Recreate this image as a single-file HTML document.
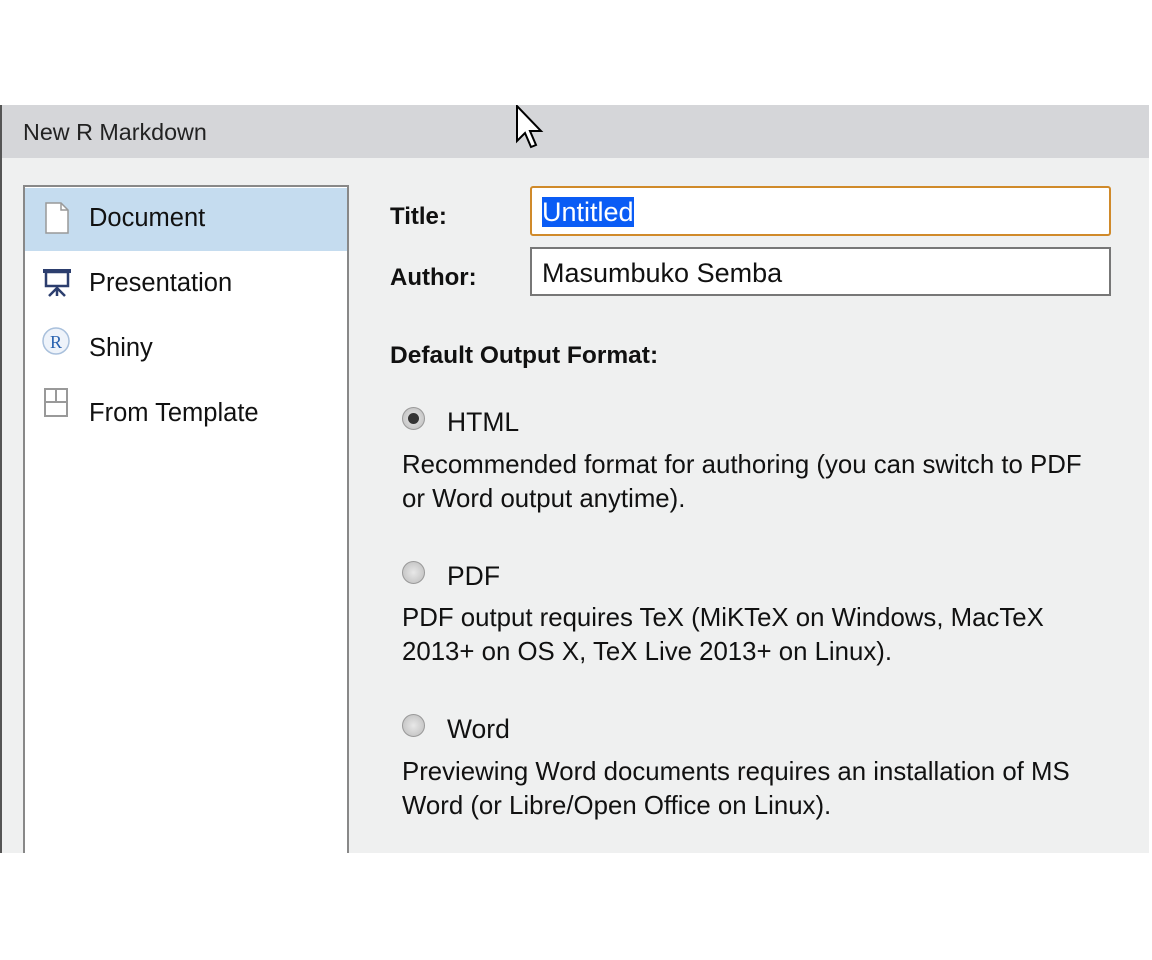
<!DOCTYPE html>
<html><head><style>
*{margin:0;padding:0;box-sizing:border-box}
body{width:1152px;height:960px;background:#fff;position:relative;overflow:hidden;font-family:"Liberation Sans",sans-serif;color:#111}
.dlg{position:absolute;left:0;top:105px;width:1149px;height:748px;background:#eff0f0;border-left:2px solid #555;overflow:hidden}
.tb{position:absolute;left:0;top:0;right:0;height:53px;background:#d5d6d9;font-size:23.3px;padding:14px 0 0 21px;color:#222}
.list{position:absolute;left:21px;top:80px;width:326px;height:700px;background:#fff;border:2px solid #888}
.row{position:absolute;left:0;width:322px;height:63px;font-size:25.5px;padding-left:64px;line-height:60px}
.sel{background:#c5dcef}
.lbl{position:absolute;font-weight:bold;font-size:24px}
.inp{position:absolute;left:530px;width:581px;background:#fff;font-size:27px;padding-left:10px}
.radio{position:absolute;left:402px;width:23px;height:23px;border-radius:50%;background:radial-gradient(circle,#e8e8e8,#bbb);border:1px solid #999}
.radio.on::after{content:"";position:absolute;left:5px;top:5px;width:11px;height:11px;border-radius:50%;background:#333}
.rl{position:absolute;left:447px;font-size:26.5px}
.desc{position:absolute;left:402px;font-size:25.8px;line-height:34px;width:745px;white-space:nowrap}
</style></head><body>
<div class="dlg">
<div class="tb">New R Markdown</div>
<div class="list">
<div class="row sel" style="top:1px">Document</div>
<div class="row" style="top:66px">Presentation</div>
<div class="row" style="top:131px">Shiny</div>
<div class="row" style="top:196px">From Template</div>
<svg style="position:absolute;left:17px;top:15px" width="30" height="250" viewBox="0 0 30 250">
<path d="M4 1H19L26 8V31H4Z" fill="#fff" stroke="#999" stroke-width="1.5"/>
<path d="M19 1V8H26" fill="none" stroke="#999" stroke-width="1.5"/>
<rect x="1" y="67" width="28" height="4" fill="#2c3e6e"/>
<rect x="4" y="70" width="22" height="14" fill="none" stroke="#2c3e6e" stroke-width="2.5"/>
<path d="M15 84V94M15 86L7 94M15 86L23 94" stroke="#2c3e6e" stroke-width="2.5" fill="none"/>
<circle cx="14" cy="139" r="13" fill="#eef3fa" stroke="#a9c0dc" stroke-width="1.5"/>
<text x="14" y="146" font-family="Liberation Serif" font-size="18" fill="#2a63b0" text-anchor="middle">R</text>
<rect x="3" y="187" width="22" height="27" fill="none" stroke="#999" stroke-width="2"/>
<path d="M3 200H25M14 187V200" stroke="#999" stroke-width="2"/>
</svg>
</div>
</div>
<div class="lbl" style="left:390px;top:203px">Title:</div>
<div class="lbl" style="left:390px;top:264px">Author:</div>
<div class="inp" style="top:186px;height:50px;border:2px solid #d08a2a;border-radius:3px;padding-top:9px"><span style="background:#0a5cf5;color:#fff">Untitled</span></div>
<div class="inp" style="top:247px;height:49px;border:2px solid #777;padding-top:9px">Masumbuko Semba</div>
<div class="lbl" style="left:390px;top:342px;font-size:24.5px">Default Output Format:</div>
<div class="radio on" style="top:407px"></div><div class="rl" style="top:407px">HTML</div>
<div class="desc" style="top:448px">Recommended format for authoring (you can switch to PDF<br>or Word output anytime).</div>
<div class="radio" style="top:561px"></div><div class="rl" style="top:561px">PDF</div>
<div class="desc" style="top:601px">PDF output requires TeX (MiKTeX on Windows, MacTeX<br>2013+ on OS X, TeX Live 2013+ on Linux).</div>
<div class="radio" style="top:714px"></div><div class="rl" style="top:714px">Word</div>
<div class="desc" style="top:755px">Previewing Word documents requires an installation of MS<br>Word (or Libre/Open Office on Linux).</div>
<svg style="position:absolute;left:515px;top:105px" width="30" height="45" viewBox="0 0 30 45"><path d="M2 1V36L10 28L16 42L21 40L15 26H26Z" fill="#fff" stroke="#000" stroke-width="2"/></svg>
</body></html>
